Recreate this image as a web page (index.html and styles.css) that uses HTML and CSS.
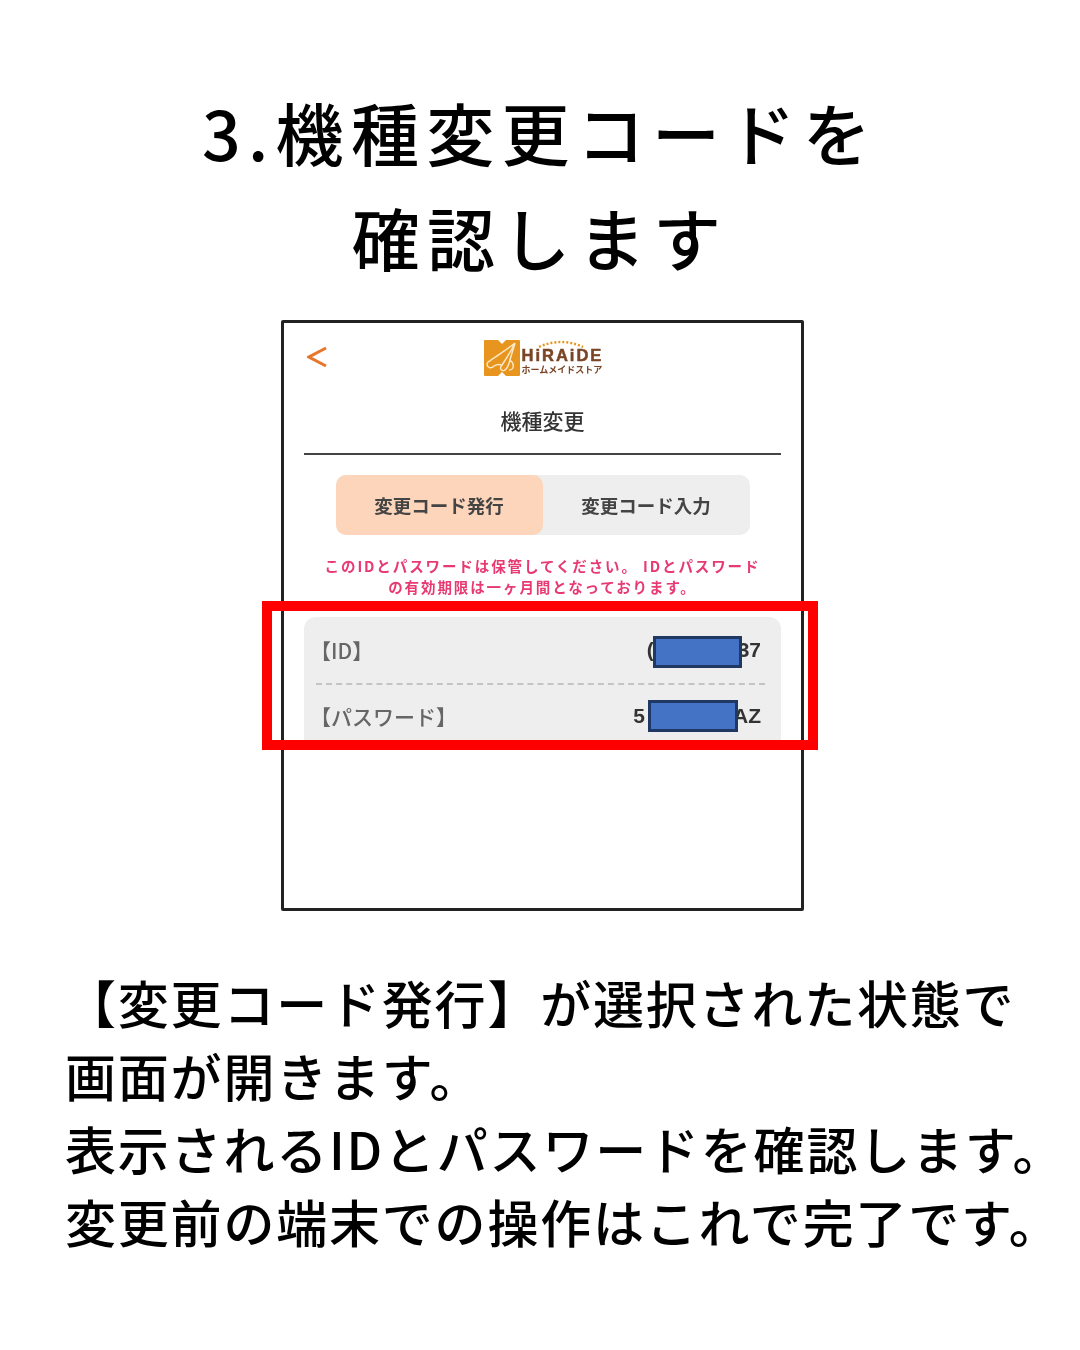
FILE: index.html
```html
<!DOCTYPE html>
<html lang="ja">
<head>
<meta charset="utf-8">
<title>機種変更コードを確認します</title>
<link rel="stylesheet" href="styles.css">
</head>
<body>
<main class="page">
  <h1 class="title"><span class="line">3.機種変更コードを</span><span class="line">確認します</span></h1>
  <section class="phone">
    <div class="shot">
      <header class="top">
        <svg class="back" viewBox="0 0 20 22" width="20" height="22"><path d="M19 2 L2 11 L19 20" fill="none" stroke="#e8752a" stroke-width="3"/></svg>
        <div class="logo">
          <svg class="mark" viewBox="0 0 36 36" width="36" height="36">
            <path d="M1 0 H14 L18 4 L22 0 H35 Q36 0 36 1 V35 Q36 36 35 36 H22 L18 32 L14 36 H1 Q0 36 0 35 V1 Q0 0 1 0 Z" fill="#e8951f"/>
            <path d="M31 3 C24 9 14 15 4 22 M31 3 C27 11 22 19 18 25 M31 3 C29 10 27 16 26 20" fill="none" stroke="#fde9c8" stroke-width="1.5"/>
            <path d="M4 22 C1 26 6 30 10 26 C13 24 15 24 18 25 C14 29 19 33 22 29 C24 27 25 24 26 20 C31 24 30 30 25 30" fill="none" stroke="#fde9c8" stroke-width="1.4"/>
          </svg>
          <div class="brand">
            <svg class="dots" viewBox="0 0 50 8" width="50" height="8"><path d="M3 7 Q25 -3 47 7" fill="none" stroke="#e8951f" stroke-width="2.4" stroke-dasharray="2 2"/></svg>
            <div class="name">HiRAiDE</div>
            <div class="sub">ホームメイドストア</div>
          </div>
        </div>
      </header>
      <h2 class="heading">機種変更</h2>
      <div class="tabs">
        <div class="tab active">変更コード発行</div>
        <div class="tab">変更コード入力</div>
      </div>
      <p class="note">このIDとパスワードは保管してください。 IDとパスワード<br>の有効期限は一ヶ月間となっております。</p>
      <div class="panel">
        <div class="row first">
          <span class="key">【ID】</span>
          <span class="value"><span>(</span><i class="mask"></i><span>37</span></span>
        </div>
        <div class="row second">
          <span class="key">【パスワード】</span>
          <span class="value"><span>5</span><i class="mask mask-b"></i><span>AZ</span></span>
        </div>
      </div>
    </div>
    <div class="highlight"></div>
  </section>
  <div class="body">
    <p class="bline">【変更コード発行】が選択された状態で</p>
    <p class="bline">画面が開きます。</p>
    <p class="bline">表示されるIDとパスワードを確認します。</p>
    <p class="bline">変更前の端末での操作はこれで完了です。</p>
  </div>
</main>
</body>
</html>
```
FILE: styles.css
```css
* { box-sizing: border-box; }
html, body { margin: 0; padding: 0; background: #fff; }
body { font-family: "Noto Sans CJK JP", "Noto Sans", sans-serif; color: #000; }
.page { width: 1080px; height: 1350px; overflow: hidden; display: flex; flex-direction: column; align-items: flex-start; padding-top: 79px; }
.title { margin: 0; width: 1080px; text-align: center; font-size: 68px; font-weight: 500; line-height: 105px; letter-spacing: 7.3px; }
.line { display: block; white-space: nowrap; }
.phone { position: relative; width: 523px; height: 591px; margin: 31px 0 0 281px; border: 3px solid #222; border-radius: 2px; background: #fff; }
.shot { display: flex; flex-direction: column; align-items: center; height: 100%; filter: blur(0.6px); color: #333; }
.top { position: relative; width: 100%; height: 56px; padding-top: 17px; display: flex; justify-content: center; }
.back { position: absolute; left: 23px; top: 23px; }
.logo { display: flex; align-items: flex-start; gap: 2px; }
.mark { display: block; }
.brand { position: relative; width: 80px; line-height: 1; padding-top: 7px; }
.dots { position: absolute; left: 14px; top: 0; }
.name { font-family: "Liberation Sans", sans-serif; font-size: 16.5px; font-weight: 700; color: #7a4526; letter-spacing: 2px; white-space: nowrap; -webkit-text-stroke: 0.5px #7a4526; }
.sub { font-size: 9px; font-weight: 700; color: #7a4526; margin-top: 1px; white-space: nowrap; }
.heading { margin: 26px 0 0; width: 477px; height: 50px; text-align: center; font-size: 21px; font-weight: 500; line-height: 30px; border-bottom: 2px solid #444; }
.tabs { display: flex; width: 414px; height: 60px; margin-top: 20px; background: #eee; border-radius: 10px; }
.tab { flex: 1; display: flex; align-items: center; justify-content: center; font-size: 18.5px; font-weight: 700; color: #444; border-radius: 10px; }
.tab.active { background: #fcd5bb; }
.note { margin: 20px 0 0; width: 477px; text-align: center; font-size: 14.5px; line-height: 21px; font-weight: 700; letter-spacing: 1.9px; color: #e83a72; white-space: nowrap; }
.panel { width: 477px; height: 128px; margin-top: 20px; padding: 0 16px 0 12px; background: #eee; border-radius: 12px 12px 0 0; font-size: 21px; }
.row { display: flex; justify-content: space-between; align-items: center; padding-right: 4px; }
.row.first { height: 68px; border-bottom: 2px dashed #c4c4c4; }
.row.second { height: 62px; }
.key { color: #666; font-weight: 500; margin-left: -6px; }
.value { display: flex; align-items: center; color: #333; font-family: "Liberation Sans", sans-serif; font-weight: 700; }
.mask { display: block; width: 89px; height: 32px; margin: 4px -4px 0 -1px; background: #4472c4; border: 3px solid #1f3864; position: relative; }
.mask-b { width: 90px; margin: 0 -5px 0 3px; }
.highlight { position: absolute; left: -22px; top: 278px; width: 556px; height: 149px; border: 10px solid #fe0000; }
.body { margin: 55px 0 0 65px; font-size: 51px; line-height: 73px; font-weight: 500; letter-spacing: 1.8px; }
.bline { margin: 0; white-space: nowrap; }
```
